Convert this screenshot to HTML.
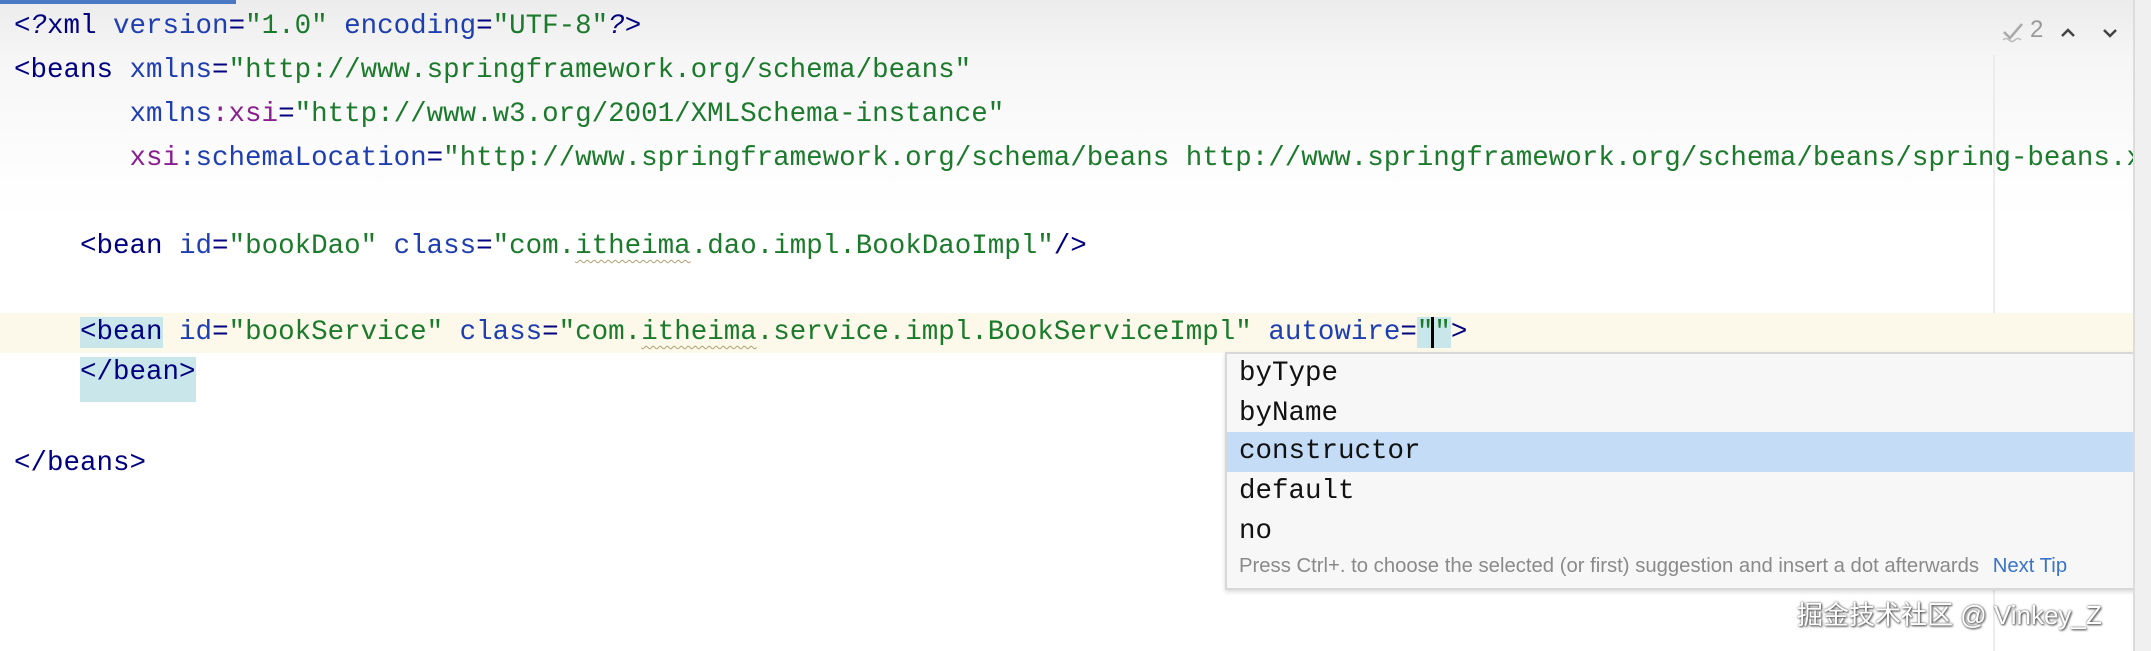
<!DOCTYPE html>
<html><head><meta charset="utf-8"><style>
body{margin:0;width:2151px;height:651px;overflow:hidden;background:#fff;position:relative;font-family:"Liberation Mono",monospace}
.bg{position:absolute;left:0;top:0;width:2133px;height:651px;background:linear-gradient(#ececec 0px,#f6f6f6 60px,#fdfdfd 170px,#fff 220px)}
.cur{position:absolute;left:0;top:313px;width:2133px;height:40px;background:#fcf8ea}
.ln{position:absolute;left:14px;font-size:27.5px;line-height:44px;height:44px;white-space:pre;color:#000080}
.a{color:#1f3fb0}.v{color:#1c7a2c}.x{color:#8a1f8f}.t{color:#000080}
.hl{background:#c9e6ea}
.sq{text-decoration:underline wavy #b0a070 1px;text-underline-offset:6px}
.pop{position:absolute;left:1225px;top:352px;width:940px;height:234px;background:#f7f7f7;border:2px solid #d8d8d8;box-shadow:0 2px 4px rgba(0,0,0,.15)}
.it{position:absolute;left:12px;font-size:27.5px;line-height:40px;height:40px;color:#111;width:100%}
.tip{position:absolute;left:12px;top:201px;font-family:"Liberation Sans",sans-serif;font-size:20.3px;color:#8a8a8a}
.side{position:absolute;left:2133px;top:0;width:18px;height:651px;background:#f0f0f0;border-left:2px solid #dcdcdc}
.wm{position:absolute;left:1797px;top:595px;font-family:"Liberation Sans","Noto Sans CJK SC",sans-serif;font-size:26px;color:#fff;text-shadow:0 0 2px #555,1px 1px 2px #444}
</style></head><body>
<div class="bg"></div>
<div style="position:absolute;left:0;top:0;width:236px;height:4px;background:#4a78c2"></div>
<div style="position:absolute;left:1993px;top:55px;width:2px;height:596px;background:#ececec"></div>
<div class="cur"></div>
<div class="ln" style="top:5px"><span style="font-style:italic">&lt;?</span>xml <span class="a">version</span>=<span class="v">"1.0"</span> <span class="a">encoding</span>=<span class="v">"UTF-8"</span><span style="font-style:italic">?&gt;</span></div>
<div class="ln" style="top:49px">&lt;beans <span class="a">xmlns</span>=<span class="v">"http://www.springframework.org/schema/beans"</span></div>
<div class="ln" style="top:93px">       <span class="a">xmlns</span><span class="x">:xsi</span>=<span class="v">"http://www.w3.org/2001/XMLSchema-instance"</span></div>
<div class="ln" style="top:137px">       <span class="x">xsi</span><span class="a">:schemaLocation</span>=<span class="v">"http://www.springframework.org/schema/beans http://www.springframework.org/schema/beans/spring-beans.x</span></div>
<div class="ln" style="top:225px">    &lt;bean <span class="a">id</span>=<span class="v">"bookDao"</span> <span class="a">class</span>=<span class="v">"com.<span class="sq">itheima</span>.dao.impl.BookDaoImpl"</span>/&gt;</div>
<div class="ln" style="top:311px">    <span class="hl">&lt;bean</span> <span class="a">id</span>=<span class="v">"bookService"</span> <span class="a">class</span>=<span class="v">"com.<span class="sq">itheima</span>.service.impl.BookServiceImpl"</span> <span class="a">autowire</span>=<span class="v hl">"<span style="border-left:3px solid #000;margin-left:-2px"></span>"</span>&gt;</div>
<div class="ln" style="top:351px">    <span class="hl" style="padding-bottom:14px">&lt;/bean&gt;</span></div>
<div class="ln" style="top:442px">&lt;/beans&gt;</div>
<svg style="position:absolute;left:2000px;top:18px" width="26" height="26"><path d="M4 14 L10 20 L22 6" stroke="#aaa" stroke-width="2.5" fill="none"/><path d="M3 22 q3 -3 6 0 t6 0 t6 0" stroke="#bbb" stroke-width="1.5" fill="none"/></svg>
<div style="position:absolute;left:2030px;top:16px;font-family:'Liberation Sans',sans-serif;font-size:24px;color:#999">2</div>
<svg style="position:absolute;left:2058px;top:24px" width="70" height="16"><path d="M4 12 L10 6 L16 12" stroke="#444" stroke-width="2.5" fill="none"/><path d="M46 6 L52 12 L58 6" stroke="#444" stroke-width="2.5" fill="none"/></svg>
<div class="pop">
<div class="it" style="top:0">byType</div>
<div class="it" style="top:40px">byName</div>
<div style="position:absolute;left:0;top:78px;width:100%;height:40px;background:#c4dcf6"></div>
<div class="it" style="top:78px">constructor</div>
<div class="it" style="top:118px">default</div>
<div class="it" style="top:158px">no</div>
<div class="tip">Press Ctrl+. to choose the selected (or first) suggestion and insert a dot afterwards <span style="color:#3a73c8;margin-left:8px">Next Tip</span></div>
</div>
<div class="side"></div>
<div class="wm">掘金技术社区 @ Vinkey_Z</div>
</body></html>
